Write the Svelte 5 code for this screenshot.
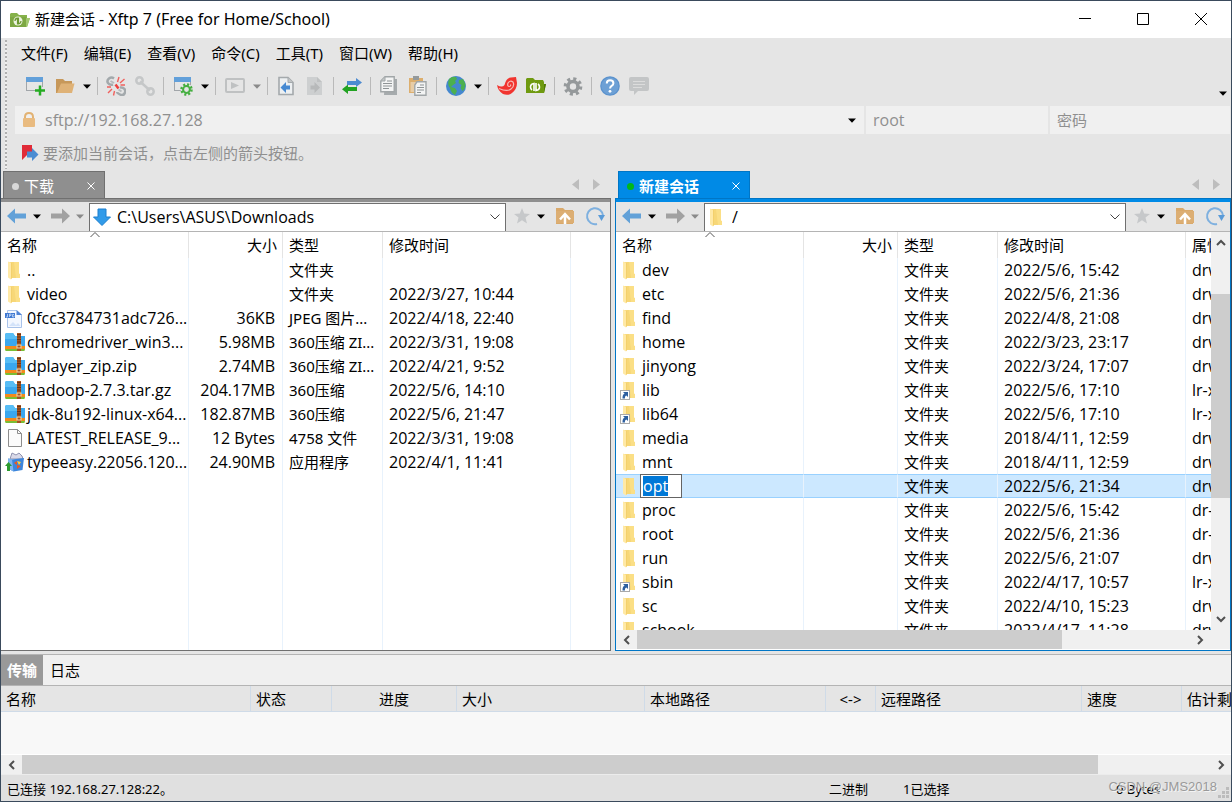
<script>
  const menus = ['文件(F)', '编辑(E)', '查看(V)', '命令(C)', '工具(T)', '窗口(W)', '帮助(H)'];

  const tools = [
    { icon: 'new', label: '新建会话' },
    { icon: 'open', label: '打开', split: true },
    { sep: true },
    { icon: 'disconnect', label: '断开' },
    { icon: 'reconnect', label: '重新连接', disabled: true },
    { sep: true },
    { icon: 'props', label: '属性', split: true },
    { sep: true },
    { icon: 'run', label: '运行', split: true, disabled: true },
    { sep: true },
    { icon: 'docLeft', label: '下载文件' },
    { icon: 'docRight', label: '上传文件', disabled: true },
    { sep: true },
    { icon: 'swap', label: '同步' },
    { sep: true },
    { icon: 'copy', label: '复制' },
    { icon: 'paste', label: '粘贴' },
    { sep: true },
    { icon: 'globe', label: '编码', split: true },
    { sep: true },
    { icon: 'xshell', label: 'Xshell' },
    { icon: 'xftp', label: 'Xftp' },
    { sep: true },
    { icon: 'gear', label: '选项' },
    { sep: true },
    { icon: 'help', label: '帮助' },
    { icon: 'chat', label: '反馈', disabled: true }
  ];

  const localFiles = [
    { icon: 'folder', name: '..', size: '', type: '文件夹', date: '' },
    { icon: 'folder', name: 'video', size: '', type: '文件夹', date: '2022/3/27, 10:44' },
    { icon: 'jpg', name: '0fcc3784731adc726...', size: '36KB', type: 'JPEG 图片...', date: '2022/4/18, 22:40' },
    { icon: 'zip', name: 'chromedriver_win3...', size: '5.98MB', type: '360压缩 ZI...', date: '2022/3/31, 19:08' },
    { icon: 'zip', name: 'dplayer_zip.zip', size: '2.74MB', type: '360压缩 ZI...', date: '2022/4/21, 9:52' },
    { icon: 'zip', name: 'hadoop-2.7.3.tar.gz', size: '204.17MB', type: '360压缩', date: '2022/5/6, 14:10' },
    { icon: 'zip', name: 'jdk-8u192-linux-x64...', size: '182.87MB', type: '360压缩', date: '2022/5/6, 21:47' },
    { icon: 'file', name: 'LATEST_RELEASE_9...', size: '12 Bytes', type: '4758 文件', date: '2022/3/31, 19:08' },
    { icon: 'exe', name: 'typeeasy.22056.120...', size: '24.90MB', type: '应用程序', date: '2022/4/1, 11:41' }
  ];

  const dir = (name, date, attr = 'drwxr-xr-x', icon = 'folder') => ({ icon, name, size: '', type: '文件夹', date, attr });
  const remoteFiles = [
    dir('dev', '2022/5/6, 15:42'),
    dir('etc', '2022/5/6, 21:36'),
    dir('find', '2022/4/8, 21:08'),
    dir('home', '2022/3/23, 23:17'),
    dir('jinyong', '2022/3/24, 17:07'),
    dir('lib', '2022/5/6, 17:10', 'lr-xr-xr-x', 'link'),
    dir('lib64', '2022/5/6, 17:10', 'lr-xr-xr-x', 'link'),
    dir('media', '2018/4/11, 12:59'),
    dir('mnt', '2018/4/11, 12:59'),
    { ...dir('opt', '2022/5/6, 21:34'), editing: true },
    dir('proc', '2022/5/6, 15:42', 'dr-xr-xr-x'),
    dir('root', '2022/5/6, 21:36', 'dr-xr-x---'),
    dir('run', '2022/5/6, 21:07'),
    dir('sbin', '2022/4/17, 10:57', 'lr-xr-xr-x', 'link'),
    dir('sc', '2022/4/10, 15:23'),
    dir('schook', '2022/4/17, 11:28')
  ];

  const transferCols = [
    { label: '名称', w: 250 },
    { label: '状态', w: 81 },
    { label: '进度', w: 125, center: true },
    { label: '大小', w: 188 },
    { label: '本地路径', w: 181 },
    { label: '<->', w: 50, center: true },
    { label: '远程路径', w: 206 },
    { label: '速度', w: 100 },
    { label: '估计剩余时间', w: 110 }
  ];
</script>

{#snippet caret()}
  <svg width="8" height="5" viewBox="0 0 8 5" aria-hidden="true"><path d="M0 0.5h8L4 4.7z" fill="currentColor" /></svg>
{/snippet}

{#snippet folderShape()}
  <path d="M4 2h10v11.500l1 1V18H4z" fill="#f7d777" />
  <path d="M9 2h5v11.500l1 1V18h-4z" fill="#fbdf86" />
  <path d="M3 1.500l4 1.800V18.500L6 19.500 3 17.500z" fill="#ffe9a6" />
  <path d="M6.500 3v15.500" stroke="#f3d06c" fill="none" />
{/snippet}

{#snippet icon(name, size = 20)}
  <svg width={size} height={size} viewBox="0 0 20 20" aria-hidden="true" fill="none">
    {#if name === 'folder'}
      {@render folderShape()}
    {:else if name === 'link'}
      {@render folderShape()}
      <rect x="0.500" y="10.500" width="9" height="9" fill="#fff" stroke="#a9a9a9" />
      <path d="M3 12h5v5l-1.600-1.600C5 16.200 4.800 17 5 18.500H2.500c0-2.500.5-4 2.100-4.900z" fill="#2d5fa0" />
    {:else if name === 'jpg'}
      <path d="M2.500 2.500h9l5 4v13h-14z" fill="#f2f7ff" stroke="#a9c3ea" />
      <path d="M11.500 2v5H17z" fill="#4e83d6" />
      <path d="M4 18l4-4 3 3 2-2 2.500 3z" fill="#d3e3fa" />
      <rect x="0" y="5" width="10" height="5" fill="#3f79d2" />
      <path d="M2.500 6v3H1M4.500 9V6H6v1.500H4.500M9 6.500H7.500V9H9V7.500" stroke="#c4d9f7" stroke-width=".8" />
    {:else if name === 'zip'}
      <path d="M0 3q0-2 2-2h6l2 3h10v11H0z" fill="#3aa7ee" />
      <path d="M0 3q0-2 2-2h6l2 3h2v3H0z" fill="#57bdf5" />
      <path d="M0 14h20v3H0z" fill="#f28a1c" />
      <path d="M0 17h20q0 2-1 2H1q-1 0-1-2z" fill="#79bd35" />
      <path d="M12 1h4v18h-4z" fill="#a5531f" />
      <path d="M12 2.500h4M12 5h4M12 7.500h4M12 10h4" stroke="#6b3415" />
      <rect x="12" y="13" width="4" height="3" fill="#a5531f" stroke="#f6d9a8" />
    {:else if name === 'file'}
      <path d="M3.500 1.500h9l4 4v13h-13z" fill="#fbfbfb" stroke="#8d8d8d" />
      <path d="M12.500 1.500v4h4" stroke="#8d8d8d" />
    {:else if name === 'exe'}
      <path d="M5 7l2-6 4 2 3-2 3 3 1 3z" fill="#d9d9e8" stroke="#8f93b0" />
      <path d="M3 6.500l4 1 12-1.500-1.500 12-9 1.500L4 17z" fill="#3d86dc" />
      <path d="M3 6.500l4 1L8.500 19.500 4 17z" fill="#7fb6ee" />
      <path d="M9 11l3-2v4l4 1-4 3v-4z" fill="#f0561d" />
      <path d="M12 9l4 1-2 3z" fill="#ffd23a" />
      <path d="M3.500 10L7 14H5v5H2v-5H0z" fill="#2c9b2f" />
    {:else if name === 'new'}
      <rect x="1.500" y="1.500" width="16" height="13" fill="#e6e6e6" stroke="#a2a6aa" />
      <path d="M1 1h17v5H1z" fill="#62a0da" />
      <path d="M10 11h9v8h-9z" fill="#e5e5e5" />
      <path d="M15 9.500v10M10 14.500h10" stroke="#25ac22" stroke-width="2.500" />
    {:else if name === 'open'}
      <path d="M1 3h7l2 2h7v4H6L3 17H1z" fill="#c7985a" />
      <path d="M6 7.500h13.500L17 17H2z" fill="#dfb277" />
    {:else if name === 'disconnect'}
      <path d="M8 2.500Q5.500.5 3 2.500T2 7q2 2.500 5 1.500" stroke="#a3a9ac" stroke-width="2.500" />
      <path d="M4.500 5l3.500 2" stroke="#b7bbbd" stroke-width="2" />
      <path d="M14 11.500q3-.5 4.500 1.500t0 4.500-4.500 1-3-2.500" stroke="#a3a9ac" stroke-width="2.500" />
      <path d="M12.500 13.500l3 2" stroke="#b7bbbd" stroke-width="2" />
      <path d="M13 1l-1.500 5M18.500 3L14 7M19 9h-4.500M1 11h4M6 13l-4 4M8.500 15l-1 4.500" stroke="#f0605d" stroke-width="1.400" />
      <path d="M9.500 8.500l3 4" stroke="#ee3f3c" stroke-width="2.500" />
    {:else if name === 'reconnect'}
      <g stroke="#c5c7c8" stroke-width="2.500"><circle cx="4.500" cy="4.500" r="3.200" /><circle cx="15.500" cy="15.500" r="3.200" /><path d="M5 5.500l10 9" /></g>
    {:else if name === 'props'}
      <rect x="1.500" y="1.500" width="16" height="13" fill="#e6e6e6" stroke="#a2a6aa" />
      <path d="M1 1h17v5H1z" fill="#62a0da" />
      <circle cx="13.500" cy="13.500" r="6" fill="#e5e5e5" />
      <circle cx="13.500" cy="13.500" r="5" stroke="#45af40" stroke-width="2.500" stroke-dasharray="2 1.927" />
      <circle cx="13.500" cy="13.500" r="3.400" stroke="#45af40" stroke-width="2" />
    {:else if name === 'run'}
      <rect x="1" y="3" width="18" height="13" rx="1" stroke="#bfc1c2" stroke-width="2" />
      <path d="M6 6l8 3.500L6 13z" fill="#bfc1c2" />
    {:else if name === 'docLeft'}
      <path d="M3 1.500h9l5 5v12H3z" fill="#edf0f2" stroke="#a4a9ac" stroke-width="1.600" />
      <path d="M12 1.500v5h5" fill="#c2c5c7" stroke="#a4a9ac" />
      <path d="M4.500 11.500L10 6v3.500h4v4h-4V17z" fill="#4689d2" />
    {:else if name === 'docRight'}
      <path d="M2 1h10l5 5v13H2z" fill="#cdcfd0" />
      <path d="M12 1v5h5z" fill="#bfc1c2" />
      <path d="M15 11.500L9.500 6v3.500h-4v4h4V17z" fill="#b7b9ba" />
    {:else if name === 'swap'}
      <path d="M5 5h9V2l6 4.500-6 4.500V9H5z" fill="#4d8bd0" />
      <path d="M15 11H6V8.500l-6 4.700L6 18v-3h9z" fill="#22a322" />
    {:else if name === 'copy'}
      <path d="M6 3h12v16H5z" fill="#a6abad" />
      <path d="M6 .8h9.200v15H1.800V5z" fill="#f3f4f4" stroke="#a1a6a8" stroke-width="1.400" />
      <path d="M6 1v4H2" fill="#c4c7c8" stroke="#a1a6a8" />
      <path d="M8 5h5M4 7.500h9M4 10h9M4 12.500h6" stroke="#8e9395" />
    {:else if name === 'paste'}
      <path d="M1 2h14v15H1z" fill="#dcae6d" />
      <path d="M2.500 6H11v10H2.500z" fill="#e8cda7" />
      <path d="M5 0h6v4H5z" fill="#949a9d" />
      <path d="M9 5.800h9v13.400H6.800V9z" fill="#f3f4f4" stroke="#a1a6a8" stroke-width="1.400" />
      <path d="M12 9h4M9 11.500h7M9 14h7M9 16.500h4" stroke="#8e9395" />
    {:else if name === 'globe'}
      <circle cx="10" cy="10" r="10" fill="#4588cf" />
      <path d="M3 3q3-3 7-2l1 2-2 2 1 2-3 2-2 2 4 1 2 3-2 4q-4-2-5-7Q1 9 3 3zM13 4l4-1 2.500 5-1 5-2 2-2-3 1-3-3-2z" fill="#4cb04f" />
    {:else if name === 'xshell'}
      <path d="M0 9q5 3 7.500 0Q9 2 14 1.500L19 1l1 6q0 6-5 10-4 3-9 1-5-3-6-9z" fill="#f1342f" />
      <path d="M2 12.500q8 3.500 12 .5 4-3 2-7-3-2-5 1-1 3 1 3.500 2 0 1.500-2" stroke="#f7b9b4" stroke-width="1.200" />
    {:else if name === 'xftp'}
      <path d="M0 3l1-1h6l2 2h8l1 2v2h2l-2 9H0z" fill="#6f9a10" />
      <path d="M18 8h2l-2 9z" fill="#517a06" />
      <path d="M8 15V7.500Q4.500 8 4.500 11q0 2 1.500 3M10 7v7.500q3.500-.5 3.500-3.500 0-2-1.500-3" stroke="#fff" stroke-width="1.600" />
    {:else if name === 'gear'}
      <circle cx="10" cy="10.500" r="7.600" stroke="#95999b" stroke-width="3.500" stroke-dasharray="3 2.969" />
      <circle cx="10" cy="10.500" r="5" stroke="#95999b" stroke-width="3.600" />
    {:else if name === 'help'}
      <circle cx="10" cy="10" r="9.800" fill="#5b92cd" />
      <circle cx="10" cy="10" r="8.600" fill="#6da0d5" />
      <path d="M6.800 7.500q0-3.200 3.300-3.200t3.300 2.900q0 1.500-1.800 2.600-1.500 1-1.500 2.700" stroke="#fff" stroke-width="2" />
      <circle cx="10" cy="15.300" r="1.400" fill="#fff" />
    {:else if name === 'chat'}
      <path d="M2 1h16q2 0 2 2v10q0 2-2 2H9l-4 4v-4H2q-2 0-2-2V3q0-2 2-2z" fill="#c3c5c6" />
      <path d="M4 5.500h12M4 8.500h12M4 11.500h9" stroke="#dcdcdc" />
    {:else if name === 'back'}
      <path d="M0 10l8-7.500v5h11v5H8v5z" fill="#62a1d8" />
    {:else if name === 'forward'}
      <path d="M20 10l-8-7.500v5H1v5h11v5z" fill="#a1a1a1" />
    {:else if name === 'star'}
      <path d="M10 2l2.200 5.500 5.800.4-4.500 3.700 1.500 5.900-5-3.300-5 3.300 1.500-5.900L2 7.900l5.800-.4z" fill="#c6c8ca" />
    {:else if name === 'up'}
      <path d="M1 2h7l2 2h8v14H1z" fill="#d9a96b" />
      <path d="M1 5h18v12H1z" fill="#dcae73" />
      <path d="M5 13.500L10 8l5 5.500M10 9v9" stroke="#fff" stroke-width="2.500" />
    {:else if name === 'refresh'}
      <path d="M12 18A8 8 0 1 1 18 9.500" stroke="#7eb0df" stroke-width="2" />
      <path d="M13 9h7l-3.500 6z" fill="#5a9bd8" />
    {:else if name === 'download'}
      <path d="M6 2h8v8h4.500L10 18.500 1.500 10H6z" fill="#319be9" stroke="#1c7fce" />
    {:else if name === 'lock'}
      <path d="M6 10V7q0-4 4-4t4 4v3" stroke="#e2b273" stroke-width="2" />
      <rect x="4" y="8" width="12" height="9" rx="1" fill="#e9bb80" />
    {:else if name === 'flag'}
      <path d="M2 2h10v12l-4-3-6 6z" fill="#e02b38" />
      <path d="M7 8.500h5V5l6.500 6.500L12 18v-3.500H7z" fill="#4b8cd2" />
    {:else if name === 'app'}
      <path d="M0 4l1-1h6l2 2h8v3h3l-3 9H0z" fill="#86b24a" />
      <path d="M17 8h3l-3 9H1z" fill="#a3c870" />
      <path d="M0 7h16v10H0z" fill="#7da843" />
      <circle cx="8" cy="11" r="4.500" fill="#eef5e2" />
      <path d="M7.500 14.500V8.200Q5 8.500 5 11M8.500 7.500v6.300q2.500-.3 2.500-2.800" stroke="#6c9832" stroke-width="1.200" />
    {/if}
  </svg>
{/snippet}

{#snippet chevron(d, label)}
  <button class="sb" aria-label={label}>
    <svg width="10" height="10" viewBox="0 0 10 10" fill="none" aria-hidden="true"><path {d} stroke="#505050" stroke-width="2" /></svg>
  </button>
{/snippet}

{#snippet pane(p)}
  <section class="pane {p.kind}">
    <div class="tabs">
      <div class="tab">
        <button class="tabname"><span class="dot"></span>{p.title}</button>
        <button class="tabclose" aria-label="关闭标签">
          <svg width="8" height="8" viewBox="0 0 8 8" aria-hidden="true"><path d="M.5.5l7 7M7.500.5l-7 7" stroke="#fff" /></svg>
        </button>
      </div>
      <div class="scrolltabs">
        <button aria-label="上一个标签"><svg width="7" height="11" viewBox="0 0 7 11"><path d="M7 0v11L0 5.500z" fill="#bdbdbd" /></svg></button>
        <button aria-label="下一个标签"><svg width="7" height="11" viewBox="0 0 7 11"><path d="M0 0v11l7-5.500z" fill="#bdbdbd" /></svg></button>
      </div>
    </div>
    <div class="frame">
      <div class="nav">
        <button class="navicon" aria-label="后退">{@render icon('back')}</button>
        <button class="navcaret" aria-label="后退记录">{@render caret()}</button>
        <button class="navicon" aria-label="前进">{@render icon('forward')}</button>
        <button class="navcaret off" aria-label="前进记录">{@render caret()}</button>
        <div class="path">
          {@render icon(p.pathIcon)}
          <input value={p.path} aria-label="路径" />
          <button aria-label="展开路径">
            <svg width="10" height="6" viewBox="0 0 10 6" fill="none" aria-hidden="true"><path d="M.5.5L5 5 9.500.5" stroke="#444" /></svg>
          </button>
        </div>
        <button class="navicon" aria-label="收藏">{@render icon('star')}</button>
        <button class="navcaret fav" aria-label="收藏列表">{@render caret()}</button>
        <button class="navicon wide" aria-label="上级目录">{@render icon('up')}</button>
        <button class="navicon wide" aria-label="刷新">{@render icon('refresh')}</button>
      </div>
      <div class="list">
        <div class="view">
          <table class="files">
            <colgroup><col class="c1" /><col class="c2" /><col class="c3" /><col class="c4" /><col /></colgroup>
            <thead>
              <tr>
                <th class="sorted">名称
                  <svg class="sort" width="10" height="6" viewBox="0 0 10 6" fill="none" aria-hidden="true"><path d="M.5 5L5 .5 9.500 5" stroke="#555" /></svg>
                </th>
                <th class="num">大小</th><th>类型</th><th>修改时间</th><th>{p.kind === 'remote' ? '属性' : ''}</th>
              </tr>
            </thead>
            <tbody>
              {#each p.rows as f}
                <tr class:sel={f.editing}>
                  <td class="name">
                    <div class="cell">
                      {@render icon(f.icon)}
                      {#if f.editing}
                        <span class="edit" contenteditable="true" role="textbox" tabindex="0" aria-label="重命名"><mark>{f.name}</mark></span>
                      {:else}
                        <span>{f.name}</span>
                      {/if}
                    </div>
                  </td>
                  <td class="num latin">{f.size}</td>
                  <td>{f.type}</td>
                  <td class="latin">{f.date}</td>
                  <td class="latin">{f.attr ?? ''}</td>
                </tr>
              {/each}
              <tr class="fill"><td></td><td></td><td></td><td></td><td></td></tr>
            </tbody>
          </table>
          {#if p.kind === 'remote'}
            <div class="vbar">
              {@render chevron('M1 7l4-4 4 4', '向上滚动')}
              <div class="vtrack"><div class="vthumb"></div></div>
              {@render chevron('M1 3l4 4 4-4', '向下滚动')}
            </div>
          {/if}
        </div>
        {#if p.kind === 'remote'}
          <div class="hbar">
            {@render chevron('M7 1L3 5l4 4', '向左滚动')}
            <div class="htrack"><div class="hthumb" style="width: 77%"></div></div>
            {@render chevron('M3 1l4 4-4 4', '向右滚动')}
            <span class="corner"></span>
          </div>
        {/if}
      </div>
    </div>
  </section>
{/snippet}

<main class="window">
  <header class="title">
    {@render icon('app')}
    <h1>新建会话 <span>- Xftp 7 (Free for Home/School)</span></h1>
    <div class="controls">
      <button aria-label="最小化"><svg width="12" height="12" viewBox="0 0 12 12"><path d="M0 5.500h12" stroke="#000" /></svg></button>
      <button aria-label="最大化"><svg width="12" height="12" viewBox="0 0 12 12" fill="none"><path d="M.5.5h11v11H.5z" stroke="#000" /></svg></button>
      <button aria-label="关闭"><svg width="12" height="12" viewBox="0 0 12 12"><path d="M0 0l12 12M12 0L0 12" stroke="#000" /></svg></button>
    </div>
  </header>

  <div class="chrome">
    <nav class="menu">
      {#each menus as m}<button>{m}</button>{/each}
    </nav>
    <div class="toolbar">
      {#each tools as t}
        {#if t.sep}
          <span class="sep"></span>
        {:else}
          <button class="tool" class:split={t.split} aria-label={t.label} disabled={t.disabled}>{@render icon(t.icon)}</button>
          {#if t.split}
            <button class="drop" aria-label="{t.label}选项" disabled={t.disabled}>{@render caret()}</button>
          {/if}
        {/if}
      {/each}
      <button class="overflow" aria-label="工具栏选项">{@render caret()}</button>
    </div>
    <div class="address">
      <div class="field host">
        {@render icon('lock')}
        <input value="sftp://192.168.27.128" aria-label="主机" />
        <button aria-label="主机列表">{@render caret()}</button>
      </div>
      <div class="field"><input value="root" aria-label="用户名" /></div>
      <div class="field"><input class="pw" type="password" placeholder="密码" aria-label="密码" /></div>
    </div>
    <div class="hint">{@render icon('flag')}<span>要添加当前会话，点击左侧的箭头按钮。</span></div>
  </div>

  <div class="panes">
    {@render pane({ kind: 'local', title: '下载', pathIcon: 'download', path: 'C:\\Users\\ASUS\\Downloads', rows: localFiles })}
    {@render pane({ kind: 'remote', title: '新建会话', pathIcon: 'folder', path: '/', rows: remoteFiles })}
  </div>

  <section class="transfer">
    <div class="ttabs"><button class="on">传输</button><button>日志</button></div>
    <div class="tbody">
      <table>
        <colgroup>{#each transferCols as c}<col style="width: {c.w}px" />{/each}</colgroup>
        <thead><tr>{#each transferCols as c}<th class:center={c.center}>{c.label}</th>{/each}</tr></thead>
      </table>
    </div>
    <div class="hbar">
      {@render chevron('M7 1L3 5l4 4', '向左滚动')}
      <div class="htrack"><div class="hthumb" style="width: 90.6%"></div></div>
      {@render chevron('M3 1l4 4-4 4', '向右滚动')}
    </div>
  </section>

  <footer class="status">
    <span class="conn">已连接 192.168.27.128:22。</span>
    <span class="mode">二进制</span>
    <span class="count">1已选择</span>
    <span class="bytes">0 Bytes</span>
    <span class="mark">CSDN @JMS2018</span>
    <svg class="grip" width="12" height="12" viewBox="0 0 12 12" aria-hidden="true">
      <path d="M9 0h3v3H9zM9 4h3v3H9zM5 4h3v3H5zM9 8h3v3H9zM5 8h3v3H5zM1 8h3v3H1z" fill="#bcbcbc" />
    </svg>
  </footer>
</main>

<style>
  :global(body) { margin: 0; }
  .window, .window * { box-sizing: border-box; }
  .window {
    display: flex;
    flex-direction: column;
    height: 100vh;
    border: 1px solid #3a4a5c;
    background: #e5e5e5;
    color: #000;
    font: 15px/24px "Noto Sans", "Noto Sans CJK SC", sans-serif;
    overflow: hidden;
  }
  svg { display: block; flex: none; }
  button, input {
    font: inherit;
    color: inherit;
    background: none;
    border: 0;
    padding: 0;
    margin: 0;
    outline: 0;
    min-width: 0;
  }
  button { display: flex; align-items: center; justify-content: center; white-space: nowrap; }

  .title { display: flex; align-items: center; height: 37px; flex: none; background: #fff; padding-left: 9px; gap: 5px; }
  .title h1 { margin: 0; padding-bottom: 2px; font-size: 15px; font-weight: 400; flex: 1; white-space: nowrap; }
  .title h1 span { font-size: 16px; }
  .controls { display: flex; height: 100%; padding: 0 1px 2px 0; }
  .controls button { width: 58px; }

  .chrome { flex: none; position: relative; padding-left: 14px; padding-bottom: 1px; }
  .chrome::before {
    content: "";
    position: absolute;
    left: 4px;
    top: 2px;
    bottom: 2px;
    width: 2px;
    background: repeating-linear-gradient(#b0b0b0 0 2px, #efefef 2px 4px);
  }
  .menu { display: flex; height: 32px; align-items: center; padding: 0 0 2px 6px; gap: 16px; }
  .toolbar { display: flex; height: 36px; align-items: center; padding-left: 5px; padding-bottom: 4px; }
  .tool { width: 29px; height: 28px; }
  .tool.split { width: 31px; }
  .drop { width: 13px; height: 28px; }
  .drop:disabled { color: #8a8a8a; }
  .sep { width: 8px; height: 18px; flex: none; background: linear-gradient(#b9b9b9, #b9b9b9) center / 1px 100% no-repeat; }
  .overflow { margin-left: auto; width: 16px; height: 18px; align-self: flex-end; }
  .address { display: grid; grid-template-columns: minmax(0, 1fr) 182px 180px; gap: 2px; height: 28px; padding-right: 1px; color: #8f8f8f; }
  .field { display: flex; align-items: center; background: #f0f0f0; padding: 0 7px; }
  .field input { flex: 1; font-family: "Open Sans", "Noto Sans CJK SC", sans-serif; font-size: 16px; line-height: 24px; }
  .field input.pw { font-size: 15px; }
  .field input::placeholder { color: #8f8f8f; opacity: 1; }
  .host { padding-left: 4px; gap: 6px; }
  .host button { color: #000; width: 10px; height: 20px; }
  .hint { display: flex; align-items: center; gap: 3px; height: 36px; padding-left: 5px; padding-top: 2px; color: #8f8f8f; }

  .panes { display: grid; grid-template-columns: minmax(0, 610fr) minmax(0, 616fr); column-gap: 4px; flex: 1; min-height: 0; padding-bottom: 3px; }
  .pane { display: flex; flex-direction: column; min-width: 0; min-height: 0; --line: #707070; --fill: #8f8f8f; }
  .pane.remote { --line: #0076c6; --fill: #008ae6; }
  .tabs { display: flex; height: 27px; flex: none; padding-left: 2px; }
  .remote .tabs { padding-left: 3px; }
  .tab { display: flex; align-items: center; justify-content: space-between; width: 102px; padding: 2px 9px 0 8px; color: #fff; background: var(--fill); border: 1px solid var(--line); border-bottom: 0; }
  .remote .tab { width: 132px; }
  .tabname { gap: 5px; }
  .remote .tabname { font-weight: 700; }
  .dot { width: 7px; height: 7px; border-radius: 50%; background: #d8d8d8; }
  .remote .dot { background: #00b818; }
  .scrolltabs { margin-left: auto; display: flex; gap: 14px; padding-right: 11px; }
  .frame { flex: 1; min-height: 0; display: flex; flex-direction: column; border: 1px solid var(--line); border-top: 0; }
  .local .frame { border-left: 0; }
  .frame::before { content: ""; height: 3px; flex: none; background: var(--fill); border-top: 1px solid var(--line); }
  .nav { display: flex; align-items: center; height: 30px; flex: none; padding: 1px 0 0 6px; border-bottom: 1px solid #b4b4b4; }
  .navicon { width: 20px; height: 28px; padding-bottom: 2px; }
  .navicon.wide { width: 30px; }
  .navcaret { width: 23px; height: 28px; padding: 0 3px 1px 0; }
  .navcaret.fav { width: 18px; padding-right: 0; }
  .navcaret.off { color: #8a8a8a; }
  .path { flex: 1; min-width: 0; align-self: stretch; display: flex; align-items: center; gap: 5px; margin: 0 6px 0 -4px; padding: 0 5px 1px 2px; background: #fff; border: 1px solid #707070; border-bottom: 0; }
  .path input { flex: 1; font-family: "Open Sans", "Noto Sans CJK SC", sans-serif; font-size: 16px; line-height: 24px; }
  .path button { width: 10px; height: 20px; }

  .list { flex: 1; min-height: 0; display: flex; flex-direction: column; background: #fff; }
  .view { flex: 1; min-height: 0; display: flex; overflow: hidden; }
  table { border-collapse: separate; border-spacing: 0; table-layout: fixed; text-align: left; }
  th, td { padding: 0 6px; white-space: nowrap; overflow: hidden; font-weight: 400; }
  .files { flex: 1; min-width: 0; width: 100%; }
  .files th { height: 26px; border-right: 1px solid #e4e4e4; }
  .files td { height: 24px; line-height: 22px; border-right: 1px solid #e8f2fc; }
  .files th:last-child, .files td:last-child { border-right: 0; }
  .files .fill td { height: auto; padding: 0; }
  .c1 { width: 188px; }
  .c2 { width: 94px; }
  .c3 { width: 100px; }
  .c4 { width: 188px; }
  .files .num { text-align: right; }
  .files th.num { padding-right: 5px; }
  .files td.num { padding-right: 7px; }
  .files .latin, .files .name { font-family: "Open Sans", "Noto Sans CJK SC", sans-serif; font-size: 16px; }
  .files .name { padding: 0 0 0 4px; }
  .remote .files td:last-child, .remote .files th:last-child { padding-right: 0; text-overflow: clip; }
  .cell { display: flex; align-items: center; gap: 2px; height: 22px; }
  .sorted { position: relative; }
  .sort { position: absolute; left: calc(50% - 5px); top: 0; }
  .files .sel td { background: #cce8ff; border-top: 1px solid #99d1ff; border-bottom: 1px solid #99d1ff; }
  .files .sel .name { overflow: visible; }
  .edit { width: 42px; height: 24px; margin: -1px 0 -1px -2px; padding: 1px 2px; line-height: 20px; background: #fff; border: 1px solid #646464; }
  .edit mark { display: inline-block; background: #0078d7; color: #fff; }

  .vbar { width: 19px; flex: none; display: flex; flex-direction: column; background: #f0f0f0; }
  .vbar .sb { width: 19px; height: 22px; }
  .vtrack { flex: 1; padding-top: 40px; }
  .vthumb { height: 204px; background: #cdcdcd; }
  .hbar { display: flex; height: 19px; flex: none; background: #f0f0f0; }
  .list .hbar { margin-bottom: 1px; }
  .hbar .sb { width: 21px; height: 19px; }
  .htrack { flex: 1; }
  .hthumb { height: 100%; background: #cdcdcd; }
  .corner { width: 20px; }

  .transfer { flex: none; border-top: 1px solid #b4b4b4; background: #f0f0f0; }
  .ttabs { display: flex; height: 30px; }
  .ttabs button { padding: 0 7px; }
  .ttabs .on { padding: 0 6px; background: #999; color: #fff; font-weight: 700; }
  .tbody { height: 70px; overflow: hidden; background: #f8f8f8; border-top: 1px solid #b4b4b4; border-bottom: 1px solid #fff; }
  .transfer table { width: 100%; min-width: 1291px; }
  .transfer th { height: 26px; padding: 0 5px; background: #e5e5e5; border-right: 1px solid #cfdbe8; border-bottom: 1px solid #cfdbe8; }
  .transfer th.center { text-align: center; }

  .status { position: relative; display: flex; align-items: center; height: 27px; flex: none; padding: 2px 0 0 6px; border-top: 1px solid #ececec; background: #e0e0e0; font-size: 13px; }
  .conn { flex: 1; }
  .mode { width: 74px; }
  .count { width: 213px; }
  .bytes { width: 115px; }
  .mark { position: absolute; right: 14px; top: 0; color: #9a9a9a; font-family: "Liberation Sans", sans-serif; text-shadow: 1px 1px #f4f4f4; }
  .grip { position: absolute; right: 2px; bottom: 2px; }
</style>
